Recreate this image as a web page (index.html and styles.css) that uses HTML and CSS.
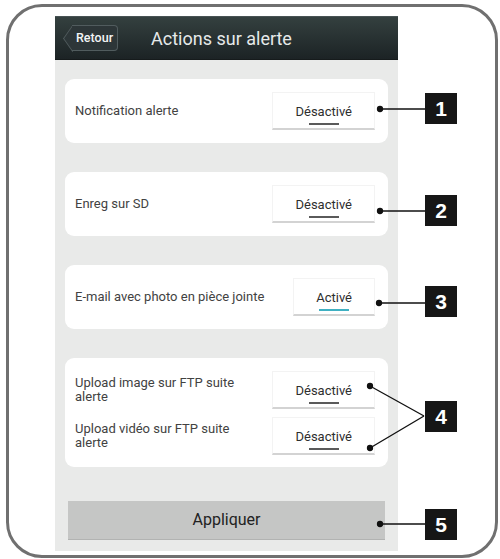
FILE: index.html
```html
<!DOCTYPE html>
<html>
<head>
    <link rel="stylesheet" href="styles.css">
</head>
<body>
    <div class="frame">
        <div class="screen">
            <div class="topbar">
                <div class="back">Retour</div>
                <div class="title">Actions sur alerte</div>
            </div>

            <div class="content">
                <div class="card">
                    <div class="row">
                        <span class="label">Notification alerte</span>
                        <div class="toggle">Désactivé</div>
                    </div>
                </div>

                <div class="card">
                    <div class="row">
                        <span class="label">Enreg sur SD</span>
                        <div class="toggle">Désactivé</div>
                    </div>
                </div>

                <div class="card">
                    <div class="row">
                        <span class="label">E-mail avec photo en pièce jointe</span>
                        <div class="toggle on">Activé</div>
                    </div>
                </div>

                <div class="card multi">
                    <div class="row">
                        <span class="label">Upload image sur FTP suite alerte</span>
                        <div class="toggle">Désactivé</div>
                    </div>
                    <div class="row">
                        <span class="label">Upload vidéo sur FTP suite alerte</span>
                        <div class="toggle">Désactivé</div>
                    </div>
                </div>

                <div class="apply">Appliquer</div>
            </div>
        </div>
    </div>

    <!-- callouts -->
    <svg class="leaders" width="500" height="559" viewBox="0 0 500 559">
        <g stroke="#111" stroke-width="1.3" fill="#111">
            <line x1="380" y1="109" x2="425" y2="109"/>
            <circle cx="380" cy="109" r="2.5"/>
            <line x1="380" y1="211" x2="425" y2="211"/>
            <circle cx="380" cy="211" r="2.5"/>
            <line x1="379" y1="303" x2="425" y2="303"/>
            <circle cx="379" cy="303" r="2.5"/>
            <line x1="370" y1="386" x2="424" y2="416"/>
            <circle cx="370" cy="386" r="2.5"/>
            <line x1="370" y1="448" x2="424" y2="416"/>
            <circle cx="370" cy="448" r="2.5"/>
            <line x1="380" y1="524" x2="425" y2="524"/>
            <circle cx="380" cy="524" r="2.5"/>
        </g>
    </svg>
    <div class="badge" style="top: 93px;">1</div>
    <div class="badge" style="top: 195px;">2</div>
    <div class="badge" style="top: 286px;">3</div>
    <div class="badge" style="top: 401px;">4</div>
    <div class="badge" style="top: 509px;">5</div>
</body>
</html>
```

FILE: styles.css
```css
body {
    margin: 0;
    width: 500px;
    height: 559px;
    overflow: hidden;
    background: #fff;
    position: relative;
    font-family: Roboto, "Liberation Sans", sans-serif;
}
.frame {
    box-sizing: border-box;
    width: 492px;
    height: 554px;
    margin: 4px 0 0 6px;
    padding: 9px 0 0 46px;
    border: 3px solid #707070;
    border-radius: 36px;
}
.screen {
    width: 343px;
    height: 535px;
    display: flex;
    flex-direction: column;
    background: #e9eae9;
}
.topbar {
    position: relative;
    z-index: 0;
    height: 44px;
    flex: none;
    display: flex;
    align-items: center;
    background: linear-gradient(#34403f, #1c2325);
    border-top: 1px solid #485354;
    border-bottom: 1px solid #161b1c;
    box-sizing: border-box;
}
.back {
    position: relative;
    height: 26px;
    line-height: 24px;
    margin-left: 17px;
    padding: 0 4px 0 4px;
    color: #f2f4f4;
    font-size: 12.5px;
    font-weight: 500;
    background: #2d3638;
    border: 1px solid #515c5e;
    border-left: none;
    border-radius: 0 4px 4px 0;
    box-sizing: border-box;
}
.back::before {
    content: "";
    position: absolute;
    left: -9px;
    top: 2.8px;
    width: 18px;
    height: 18px;
    background: #2d3638;
    border-left: 1px solid #515c5e;
    border-bottom: 1px solid #515c5e;
    transform: scaleX(0.7) rotate(45deg);
    z-index: -1;
}
.title {
    margin-left: 33px;
    color: #e6e9e9;
    font-size: 18px;
}
.content {
    flex: 1;
    display: flex;
    flex-direction: column;
    gap: 29px;
    padding: 19px 10px 10px;
}
.card {
    background: #fff;
    border-radius: 9px;
    padding: 0 13px 0 10px;
    min-height: 64px;
    display: flex;
    flex-direction: column;
    justify-content: center;
}
.card.multi {
    padding-top: 13px;
    padding-bottom: 12px;
    gap: 8px;
    min-height: 0;
}
.row {
    display: flex;
    align-items: center;
    gap: 12px;
}
.label {
    flex: 1;
    color: #424242;
    font-size: 13px;
    line-height: 14px;
}
.toggle {
    position: relative;
    height: 38px;
    line-height: 38px;
    padding: 0 22px;
    color: #2e2e2e;
    font-size: 13px;
    text-align: center;
    border: 1px solid #f3f3f3;
    border-bottom: 2px solid #d3d3d3;
    box-sizing: border-box;
}
.toggle::after {
    content: "";
    position: absolute;
    left: 50%;
    bottom: 3px;
    width: 30px;
    margin-left: -15px;
    height: 2px;
    background: #5a5a5a;
}
.toggle.on::after {
    background: #3fb0c2;
}
.apply {
    margin: 5px 3px 0;
    height: 38px;
    line-height: 38px;
    text-align: center;
    background: #c5c6c5;
    border-bottom: 1px solid #b2b3b2;
    color: #222;
    font-size: 16px;
}
.leaders {
    position: absolute;
    left: 0;
    top: 0;
}
.badge {
    position: absolute;
    left: 425px;
    width: 32px;
    height: 31px;
    line-height: 31px;
    background: #161616;
    color: #fff;
    font-family: "Liberation Sans", Arial, sans-serif;
    font-weight: bold;
    font-size: 21px;
    text-align: center;
}
```
